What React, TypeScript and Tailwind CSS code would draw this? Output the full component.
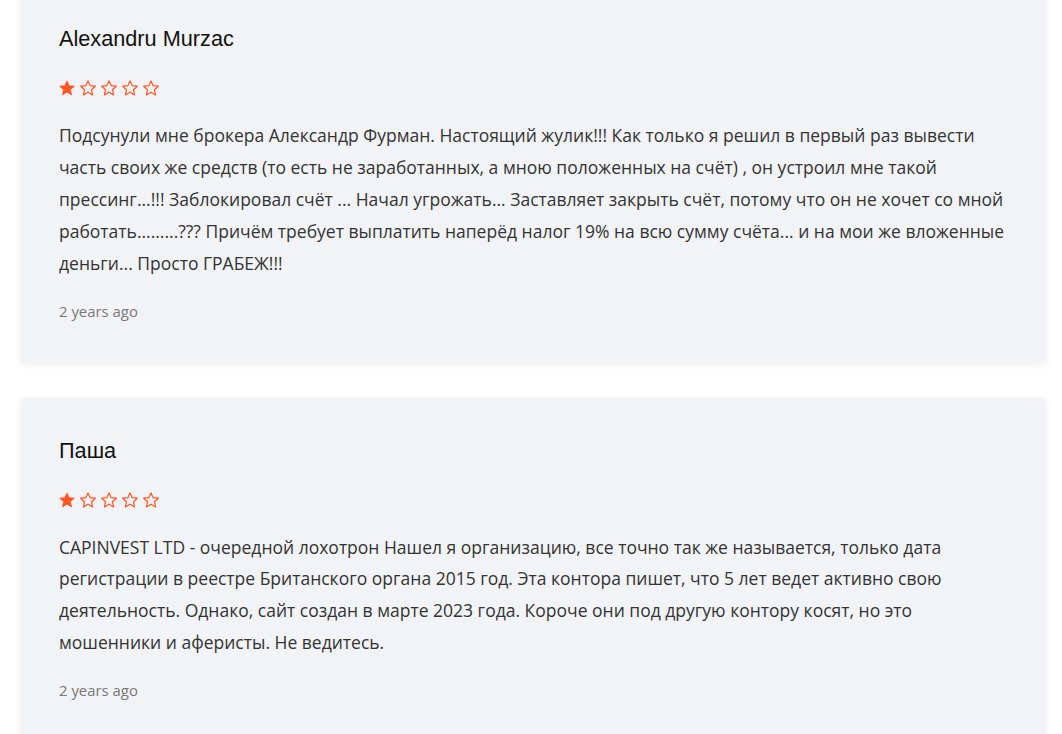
import React from "react";

const Star = ({ filled }: { filled: boolean }) => (
  <svg width="18" height="18" viewBox="0 0 24 24" className="block">
    <polygon
      points="12,2.5 14.9,8.9 21.8,9.6 16.6,14.3 18.1,21.2 12,17.6 5.9,21.2 7.4,14.3 2.2,9.6 9.1,8.9"
      fill={filled ? "#ff5722" : "none"}
      stroke="#ff5722"
      strokeWidth={filled ? 1 : 1.6}
      strokeLinejoin="round"
    />
  </svg>
);

const Card = ({
  name,
  text,
  first,
}: {
  name: string;
  text: string;
  first?: boolean;
}) => (
  <div
    className={`w-[1025px] bg-[#f2f3f7] shadow-[0_2px_8px_rgba(0,0,0,0.08)] px-[38px] ${
      first ? "-mt-[14px]" : ""
    } pt-[39px] pb-[41px]`}
  >
    <div className="font-['Liberation_Sans',Arial,sans-serif] text-[21.7px] leading-[28px] text-[#111]">
      {name}
    </div>
    <div className="flex gap-[3px] mt-[26px] -ml-[1px]">
      <Star filled />
      <Star filled={false} />
      <Star filled={false} />
      <Star filled={false} />
      <Star filled={false} />
    </div>
    <p className="mt-[23px] font-['Open_Sans',sans-serif] text-[17.5px] leading-[31.9px] text-[#333]">
      {text}
    </p>
    <div className="mt-[21px] font-['Open_Sans',sans-serif] text-[14.9px] leading-[20px] text-[#777]">
      2 years ago
    </div>
  </div>
);

export default function App() {
  return (
    <div className="bg-white w-[1062px] h-[734px] overflow-hidden pl-[21px] flex flex-col gap-[36px]">
      <Card
        first
        name="Alexandru Murzac"
        text="Подсунули мне брокера Александр Фурман. Настоящий жулик!!! Как только я решил в первый раз вывести часть своих же средств (то есть не заработанных, а мною положенных на счёт) , он устроил мне такой прессинг...!!! Заблокировал счёт ... Начал угрожать... Заставляет закрыть счёт, потому что он не хочет со мной работать.........??? Причём требует выплатить наперёд налог 19% на всю сумму счёта... и на мои же вложенные деньги... Просто ГРАБЕЖ!!!"
      />
      <Card
        name="Паша"
        text="CAPINVEST LTD - очередной лохотрон Нашел я организацию, все точно так же называется, только дата регистрации в реестре Британского органа 2015 год. Эта контора пишет, что 5 лет ведет активно свою деятельность. Однако, сайт создан в марте 2023 года. Короче они под другую контору косят, но это мошенники и аферисты. Не ведитесь."
      />
    </div>
  );
}
